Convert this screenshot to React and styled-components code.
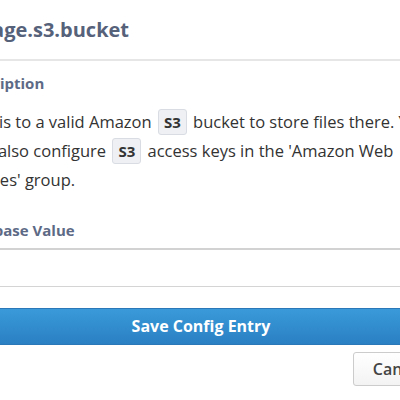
import React from "react";
import styled, { createGlobalStyle } from "styled-components";

const Global = createGlobalStyle`
  html, body { margin: 0; padding: 0; background: #fff; }
  body { font-family: "Open Sans", "Liberation Sans", sans-serif; }
`;

const Page = styled.div`
  width: 400px;
  height: 400px;
  overflow: hidden;
  background: #fff;
`;

const Modal = styled.div`
  margin-left: -42px;
  width: 486px;
`;

const Header = styled.div`
  height: 61px;
  border-bottom: 2px solid #e6e6e6;
  box-sizing: border-box;
  padding-top: 17px;
  margin-left: -600px;
  margin-right: -600px;
  padding-left: 600px;
`;

const Title = styled.h3`
  margin: 0 0 0 -6px;
  font-size: 20px;
  font-weight: 700;
  color: #56617a;
  line-height: 26px;
`;

const Body = styled.div`
  padding-top: 12px;
  display: flex;
  flex-direction: column;
`;

const Label = styled.div`
  font-size: 15px;
  font-weight: 700;
  color: #5d6a86;
  line-height: 20px;
  margin-bottom: ${(p) => p.$mb || 0}px;
`;

const Desc = styled.p`
  margin: 0 8px 25.5px -3.5px;
  font-size: 16.5px;
  line-height: 29px;
  color: #333;
`;

const Code = styled.code`
  display: inline-block;
  margin: 0 2px;
  font-family: "Open Sans", sans-serif;
  font-weight: 700;
  font-size: 15px;
  line-height: 24px;
  padding: 0 5px;
  background: #eef0f3;
  border: 1px solid #d9dde3;
  border-radius: 3px;
  color: #333;
`;

const Input = styled.input`
  display: block;
  width: calc(100% + 60px);
  margin-left: -30px;
  height: 39px;
  box-sizing: border-box;
  border: 1px solid #d4d4d4;
  border-top: 2px solid #d2d2d2;
  background: #fff;
  margin-bottom: 21px;
`;

const SaveButton = styled.button`
  display: block;
  width: calc(100% + 60px);
  margin-left: -30px;
  height: 37px;
  border: 1px solid #2a78b8;
  border-radius: 3px;
  background: linear-gradient(#3a9ad9, #2a80c3);
  color: #fff;
  font-family: "Open Sans", sans-serif;
  font-weight: 700;
  font-size: 16px;
`;

const Footer = styled.div`
  display: flex;
  justify-content: flex-end;
  padding-top: 7px;
`;

const CancelButton = styled.button`
  height: 34px;
  padding: 0 19px;
  border: 1px solid #cccccc;
  border-radius: 3px;
  background: linear-gradient(#ffffff, #f3f3f3);
  color: #444;
  font-family: "Open Sans", sans-serif;
  font-weight: 600;
  font-size: 16px;
`;

export default function App() {
  return (
    <Page>
      <Global />
      <Modal>
        <Header>
          <Title>storage.s3.bucket</Title>
        </Header>
        <Body>
          <Label $mb={14}>Description</Label>
          <Desc>
            Set this to a valid Amazon <Code>S3</Code> bucket to store files there. You
            must also configure <Code>S3</Code> access keys in the 'Amazon Web
            Services' group.
          </Desc>
          <Label $mb={8}>Database Value</Label>
          <Input />
          <SaveButton>Save Config Entry</SaveButton>
          <Footer>
            <CancelButton>Cancel</CancelButton>
          </Footer>
        </Body>
      </Modal>
    </Page>
  );
}
